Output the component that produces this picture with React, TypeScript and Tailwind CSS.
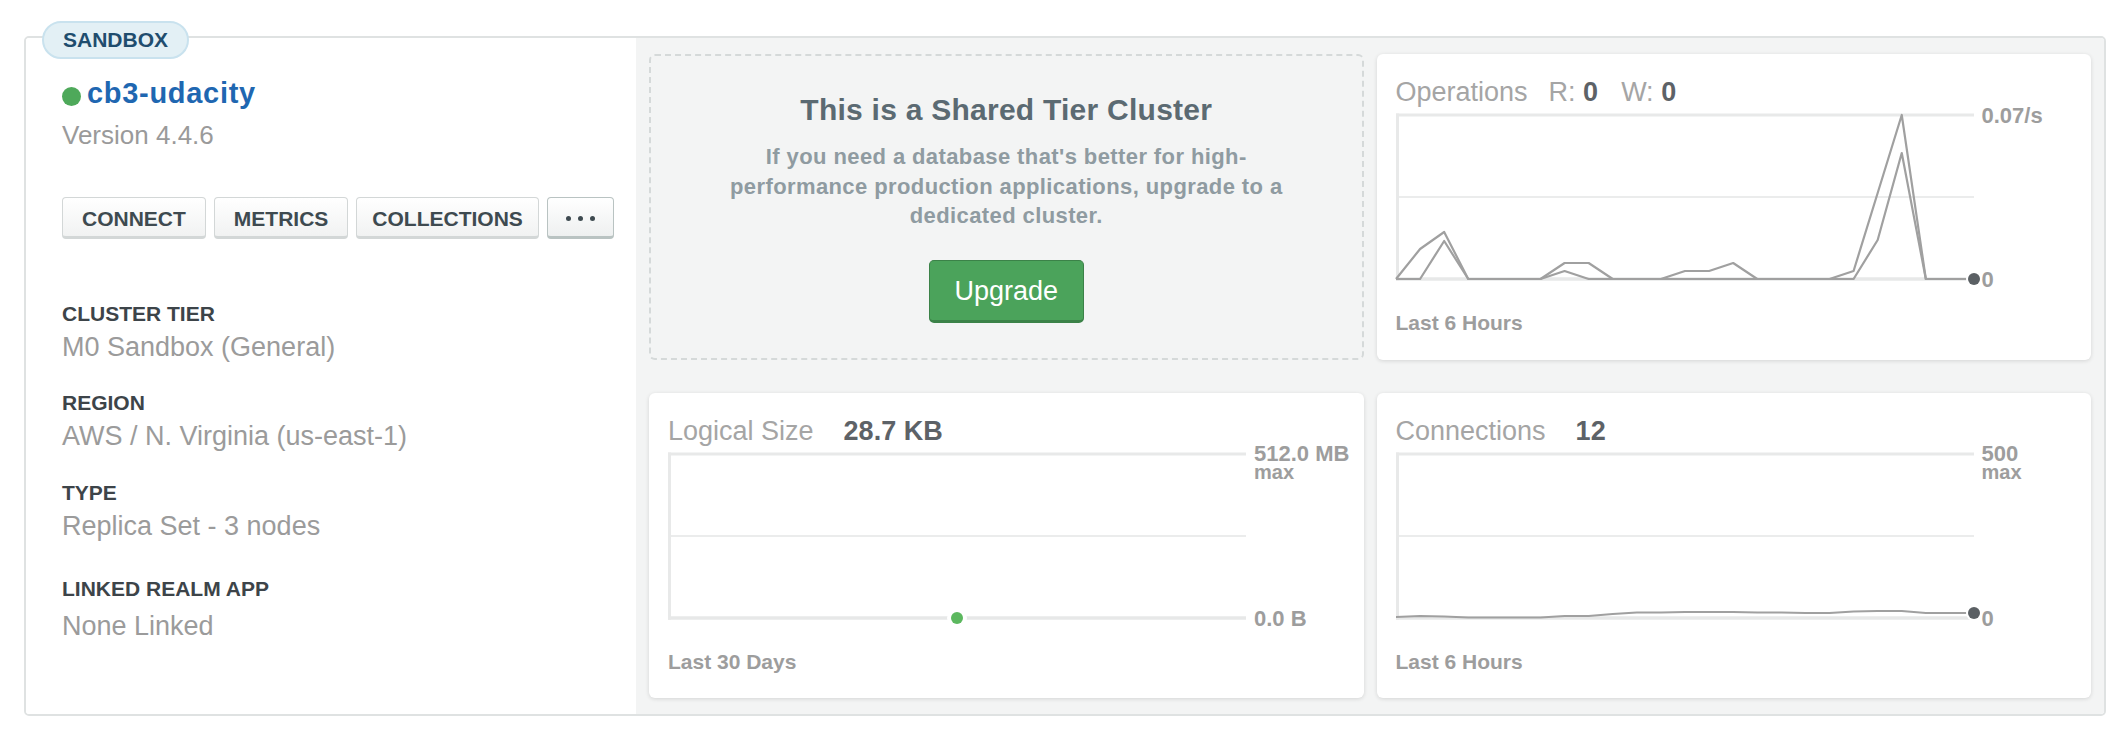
import React from "react";

const W = 578;
const H = 170;
const BASE = 167;

function pts(vals: number[]) {
  return vals.map((v, i) => `${((i * W) / 24).toFixed(2)},${BASE - v}`).join(" ");
}

type PlotProps = {
  series?: number[][];
  endDot?: number;
  greenDot?: boolean;
};

function Plot({ series = [], endDot, greenDot }: PlotProps) {
  return (
    <svg width={W} height={H} viewBox={`0 0 ${W} ${H}`} className="block shrink-0 overflow-visible">
      <line x1={0} x2={W} y1={3} y2={3} stroke="#e8e9e9" strokeWidth={3} />
      <line x1={0} x2={W} y1={85} y2={85} stroke="#ebecec" strokeWidth={2} />
      <line x1={0} x2={W} y1={BASE} y2={BASE} stroke="#e7e8e8" strokeWidth={3.5} />
      <line x1={1.5} x2={1.5} y1={1.5} y2={168.75} stroke="#e8e9e9" strokeWidth={3} />
      {series.map((s, k) => (
        <polyline
          key={k}
          points={pts(s)}
          fill="none"
          stroke="#a0a0a0"
          strokeWidth={2.2}
          strokeLinejoin="round"
        />
      ))}
      {endDot !== undefined && (
        <>
          <circle cx={W} cy={BASE - endDot} r={8} fill="#ffffff" />
          <circle cx={W} cy={BASE - endDot} r={6} fill="#5b6064" />
        </>
      )}
      {greenDot && (
        <>
          <circle cx={W / 2} cy={BASE} r={10} fill="#ffffff" />
          <circle cx={W / 2} cy={BASE} r={6} fill="#5cb85f" />
        </>
      )}
    </svg>
  );
}

type CardProps = {
  title: React.ReactNode;
  plot: React.ReactNode;
  top: React.ReactNode;
  bottom: React.ReactNode;
  footer: string;
};

function MetricCard({ title, plot, top, bottom, footer }: CardProps) {
  return (
    <div className="bg-white rounded-[6px] shadow-[0_1px_4px_rgba(0,0,0,0.13)] pl-[19px] pt-[22px]">
      <div className="flex items-baseline h-[32px] leading-[32px] text-[27px] text-[#a5a5a5] whitespace-nowrap">
        {title}
      </div>
      <div className="mt-[4px] h-[170px] flex items-start">
        {plot}
        <div className="ml-[8px] -mt-[7px] h-[186px] shrink-0 flex flex-col justify-between text-[22px] font-bold text-[#9d9d9d] leading-[22px]">
          <div>{top}</div>
          <div>{bottom}</div>
        </div>
      </div>
      <div className="mt-[28px] text-[21px] font-bold leading-[26px] text-[#9d9d9d]">{footer}</div>
    </div>
  );
}

function Btn({ children, active, px = "px-[19px]" }: { children: React.ReactNode; active?: boolean; px?: string }) {
  return (
    <div
      className={
        active
          ? "h-[42px] w-[67px] rounded-[4px] border border-b-[3px] border-[#b9c3c2] bg-gradient-to-b from-white to-[#eef0f0] flex items-center justify-center gap-[7px] pt-[2px]"
          : `h-[42px] ${px} rounded-[4px] border border-b-[3px] border-[#d3d7d7] bg-gradient-to-b from-white to-[#f1f2f2] flex items-center pt-[4px] text-[21px] font-bold text-[#3e4a50] leading-[26px]`
      }
    >
      {children}
    </div>
  );
}

function Field({ label, value, mt, gap }: { label: string; value: string; mt: string; gap: string }) {
  return (
    <div className={mt}>
      <div className="text-[21px] font-bold leading-[26px] text-[#3d4449]">{label}</div>
      <div className={`${gap} text-[27px] leading-[32px] text-[#9b9b9b]`}>{value}</div>
    </div>
  );
}

const opsA = [0, 30, 47, 0, 0, 0, 0, 16, 16, 0, 0, 0, 8, 8, 16, 0, 0, 0, 0, 8, 86, 164, 0, 0, 0];
const opsB = [0, 0, 38, 0, 0, 0, 0, 8, 0, 0, 0, 0, 0, 0, 0, 0, 0, 0, 0, 0, 39, 126, 0, 0, 0];
const conn = [1, 2, 1.5, 0.5, 0.5, 0.5, 0.5, 2, 2, 4, 5.5, 5.5, 6, 6, 6, 5.5, 5.5, 5, 5, 6.5, 7, 7, 5, 5, 5];

export default function App() {
  return (
    <div className="w-[2122px] h-[740px] bg-white overflow-hidden font-['Liberation_Sans',Arial,sans-serif]">
      <div className="pt-[36px] pl-[24px]">
        <div className="relative w-[2082px] h-[680px] border-2 border-[#dfe2e2] rounded-[5px] flex">
          <div className="absolute left-[16px] -top-[17px] h-[38px] px-[19px] rounded-full border-2 border-[#c9e2ee] bg-[#e3f0f5] flex items-center text-[21px] font-bold text-[#1f4d6e] leading-[26px]">
            SANDBOX
          </div>

          {/* Left panel */}
          <div className="w-[610px] shrink-0 pt-[38px] pl-[36px] rounded-l-[3px] bg-white">
            <div className="flex items-center h-[34px]">
              <span className="mt-[6px] w-[19px] h-[19px] rounded-full bg-[#4ea95a] shrink-0" />
              <span className="ml-[6px] text-[29px] font-bold leading-[34px] tracking-[0.7px] text-[#1f67b1]">
                cb3-udacity
              </span>
            </div>
            <div className="mt-[9px] text-[26px] leading-[32px] text-[#9a9a9a]">Version 4.4.6</div>
            <div className="mt-[46px] flex gap-[8px]">
              <Btn>CONNECT</Btn>
              <Btn>METRICS</Btn>
              <Btn px="px-[15px]">COLLECTIONS</Btn>
              <Btn active>
                <span className="w-[5px] h-[5px] rounded-full bg-[#3e4a50]" />
                <span className="w-[5px] h-[5px] rounded-full bg-[#3e4a50]" />
                <span className="w-[5px] h-[5px] rounded-full bg-[#3e4a50]" />
              </Btn>
            </div>
            <Field label="CLUSTER TIER" value="M0 Sandbox (General)" mt="mt-[62px]" gap="mt-[4px]" />
            <Field label="REGION" value="AWS / N. Virginia (us-east-1)" mt="mt-[27px]" gap="mt-[4px]" />
            <Field label="TYPE" value="Replica Set - 3 nodes" mt="mt-[28px]" gap="mt-[4px]" />
            <Field label="LINKED REALM APP" value="None Linked" mt="mt-[34px]" gap="mt-[8px]" />
          </div>

          {/* Right region */}
          <div className="flex-1 bg-[#f3f4f4] rounded-r-[3px] px-[13px] py-[16px] grid grid-cols-2 grid-rows-2 gap-x-[13px] gap-y-[33px]">
            <div className="rounded-[6px] border-2 border-dashed border-[#d5d9d9] flex flex-col items-center pt-[36px]">
              <div className="text-[30px] font-bold leading-[36px] tracking-[0.25px] text-[#5b6a72]">
                This is a Shared Tier Cluster
              </div>
              <p className="mt-[14px] text-center text-[22px] font-bold leading-[29.5px] tracking-[0.4px] text-[#8f9ba1]">
                If you need a database that's better for high-
                <br />
                performance production applications, upgrade to a
                <br />
                dedicated cluster.
              </p>
              <div className="mt-[29.5px] w-[155px] h-[63px] rounded-[5px] border border-b-[3px] border-[#3b8248] bg-[#4ba35b] flex items-center justify-center text-[27px] leading-[32px] text-white">
                Upgrade
              </div>
            </div>

            <MetricCard
              title={
                <>
                  <span>Operations</span>
                  <span className="ml-[21px]">
                    R: <b className="text-[#5d6267]">0</b>
                  </span>
                  <span className="ml-[23px]">
                    W: <b className="text-[#5d6267]">0</b>
                  </span>
                </>
              }
              plot={<Plot series={[opsA, opsB]} endDot={0} />}
              top={<div>0.07/s</div>}
              bottom={<div>0</div>}
              footer="Last 6 Hours"
            />

            <MetricCard
              title={
                <>
                  <span>Logical Size</span>
                  <b className="ml-[30px] text-[#5d6267]">28.7 KB</b>
                </>
              }
              plot={<Plot greenDot />}
              top={
                <>
                  <div className="leading-[20px]">512.0 MB</div>
                  <div className="text-[20px] leading-[17px]">max</div>
                </>
              }
              bottom={<div>0.0 B</div>}
              footer="Last 30 Days"
            />

            <MetricCard
              title={
                <>
                  <span>Connections</span>
                  <b className="ml-[30px] text-[#5d6267]">12</b>
                </>
              }
              plot={<Plot series={[conn]} endDot={5} />}
              top={
                <>
                  <div className="leading-[20px]">500</div>
                  <div className="text-[20px] leading-[17px]">max</div>
                </>
              }
              bottom={<div>0</div>}
              footer="Last 6 Hours"
            />
          </div>
        </div>
      </div>
    </div>
  );
}
